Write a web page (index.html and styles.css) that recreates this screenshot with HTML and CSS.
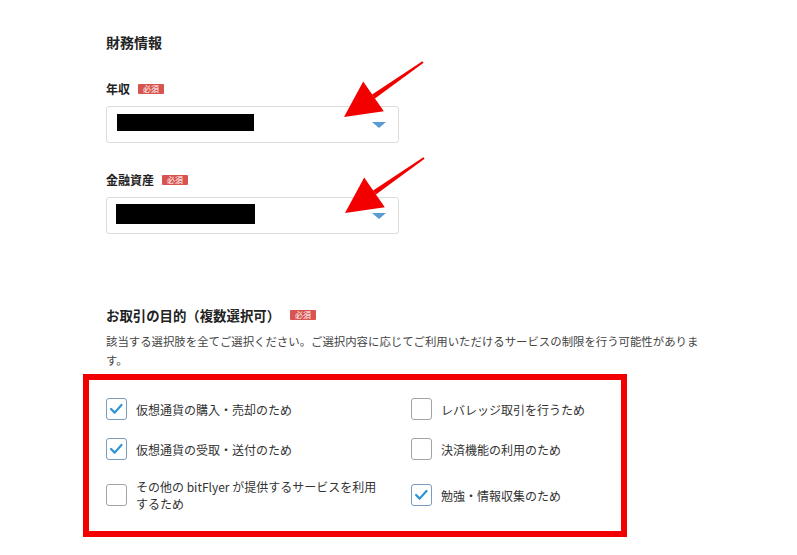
FILE: index.html
```html
<!DOCTYPE html>
<html lang="ja">
<head>
  <meta charset="UTF-8">
  <meta name="viewport" content="width=device-width, initial-scale=1.0">
  <title>財務情報</title>
  <link rel="stylesheet" href="styles.css">
</head>
<body>
  <div class="page">
    <div class="section-title">財務情報</div>

    <div class="field">
      <div class="field-label">年収<span class="required">必須</span></div>
      <div class="select select-income">
        <span class="redact"></span>
        <span class="caret"></span>
      </div>
    </div>

    <div class="field">
      <div class="field-label">金融資産<span class="required">必須</span></div>
      <div class="select select-assets">
        <span class="redact"></span>
        <span class="caret"></span>
      </div>
    </div>

    <div class="purpose">
      <div class="purpose-title">お取引の目的（複数選択可）<span class="required">必須</span></div>
      <p class="purpose-desc">該当する選択肢を全てご選択ください。ご選択内容に応じてご利用いただけるサービスの制限を行う可能性があります。</p>

      <div class="highlight">
        <div class="check-grid">
          <label class="check">
            <span class="box checked"><svg viewBox="0 0 21 21"><polyline points="4.5,10.5 8.5,14.5 16,6"/></svg></span>
            <span class="check-text">仮想通貨の購入・売却のため</span>
          </label>
          <label class="check">
            <span class="box"></span>
            <span class="check-text">レバレッジ取引を行うため</span>
          </label>
          <label class="check">
            <span class="box checked"><svg viewBox="0 0 21 21"><polyline points="4.5,10.5 8.5,14.5 16,6"/></svg></span>
            <span class="check-text">仮想通貨の受取・送付のため</span>
          </label>
          <label class="check">
            <span class="box"></span>
            <span class="check-text">決済機能の利用のため</span>
          </label>
          <label class="check">
            <span class="box"></span>
            <span class="check-text">その他の bitFlyer が提供するサービスを利用するため</span>
          </label>
          <label class="check">
            <span class="box checked"><svg viewBox="0 0 21 21"><polyline points="4.5,10.5 8.5,14.5 16,6"/></svg></span>
            <span class="check-text">勉強・情報収集のため</span>
          </label>
        </div>
      </div>
    </div>
  </div>

  <!-- 注釈の矢印 -->
  <svg class="annotations" viewBox="0 0 797 555" width="797" height="555">
    <g class="arrow">
      <polygon points="423.6,62.8 422.4,61.2 372.1,94.4 374.9,98.5"/>
      <polygon points="344,117 363.2,81.6 383.8,111.2"/>
    </g>
    <g class="arrow" transform="translate(1,96)">
      <polygon points="423.6,62.8 422.4,61.2 372.1,94.4 374.9,98.5"/>
      <polygon points="344,117 363.2,81.6 383.8,111.2"/>
    </g>
  </svg>
</body>
</html>
```

FILE: styles.css
```css
* {
  box-sizing: border-box;
  margin: 0;
  padding: 0;
}

body {
  font-family: "Noto Sans CJK JP", "Noto Sans", sans-serif;
  background-color: #fff;
  color: #333;
}

.page {
  width: 702px;
  padding: 32px 0 0 106px;
}

.section-title {
  font-size: 14px;
  font-weight: 700;
  line-height: 20px;
  color: #222;
}

.field {
  margin-top: 28px;
}

.field-label {
  display: flex;
  align-items: center;
  font-size: 12px;
  font-weight: 700;
  line-height: 18px;
  color: #222;
}

.required {
  display: inline-block;
  margin-left: 8px;
  padding: 0 5px;
  font-size: 8px;
  font-weight: 400;
  line-height: 10px;
  color: #fff;
  background-color: #d9534f;
  border-radius: 1px;
}

.select {
  display: flex;
  align-items: flex-start;
  width: 293px;
  height: 37px;
  margin-top: 8px;
  padding: 0 12px 0 10px;
  border: 1px solid #dcdcdc;
  border-radius: 3px;
  background-color: #fff;
}

.redact {
  display: block;
  background-color: #000;
}

.select-income .redact {
  width: 137px;
  height: 17px;
  margin-top: 7px;
}

.select-assets .redact {
  width: 139px;
  height: 20px;
  margin-top: 6px;
  margin-left: -1px;
}

.caret {
  align-self: center;
  margin-left: auto;
  width: 0;
  height: 0;
  border-left: 7px solid transparent;
  border-right: 7px solid transparent;
  border-top: 6px solid #5b9bd5;
}

.purpose {
  margin-top: 72px;
}

.purpose-title {
  display: flex;
  align-items: center;
  font-size: 13.4px;
  font-weight: 700;
  line-height: 18px;
  color: #222;
}

.purpose-title .required {
  margin-left: 10px;
}

.purpose-desc {
  margin-top: 8px;
  font-size: 11.4px;
  line-height: 19px;
  color: #444;
}

.highlight {
  width: 544px;
  margin: 4px 0 0 -23px;
  padding: 18px 17px 19px;
  border: 6px solid #f20000;
}

.check-grid {
  display: grid;
  grid-template-columns: 280px 1fr;
  column-gap: 25px;
  row-gap: 18px;
}

.check {
  display: flex;
  align-items: center;
  gap: 9px;
  cursor: pointer;
}

.box {
  flex: none;
  display: block;
  width: 21px;
  height: 22px;
  border: 1px solid #a3a3a3;
  border-radius: 3px;
  background-color: #fff;
}

.box.checked {
  border-color: #7a9cbc;
}

.box svg {
  display: block;
  width: 19px;
  height: 20px;
}

.box svg polyline {
  fill: none;
  stroke: #2b93d3;
  stroke-width: 2.4;
  stroke-linecap: round;
  stroke-linejoin: round;
}

.check-text {
  max-width: 246px;
  font-size: 12px;
  line-height: 17px;
  color: #333;
}

.annotations {
  position: absolute;
  top: 0;
  left: 0;
  pointer-events: none;
}

.arrow polygon {
  fill: #f20000;
}
```
